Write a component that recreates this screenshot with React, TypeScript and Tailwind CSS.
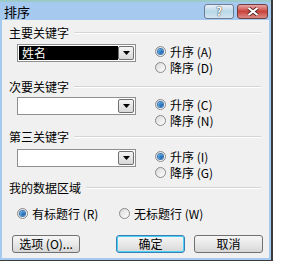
import React from "react";

const font = { fontFamily: '"Noto Sans CJK SC", "Noto Sans", sans-serif' };

const Radio = ({ checked }: { checked?: boolean }) => (
  <span className="w-[11px] h-[11px] rounded-full border border-[#8a8a8a] bg-gradient-to-br from-[#d9d9d9] to-[#ffffff] flex items-center justify-center shrink-0">
    {checked && (
      <span className="w-[5px] h-[5px] rounded-full bg-gradient-to-br from-[#62b8f0] to-[#0d4f9c] shadow-[0_0_0_1px_#3a78b8]" />
    )}
  </span>
);

const RadioItem = ({ label, checked }: { label: string; checked?: boolean }) => (
  <div className="flex items-center gap-[4px] h-[16px]">
    <Radio checked={checked} />
    <span className="text-[12px] leading-[13px] text-black whitespace-nowrap">{label}</span>
  </div>
);

const GroupLabel = ({ text }: { text: string }) => (
  <div className="flex items-center h-[12px] pr-[8px]">
    <span className="text-[12px] leading-none text-black whitespace-nowrap">{text}</span>
    <div className="flex-1 ml-[5px] border-t border-[#d5d5d5] border-b border-b-white" />
  </div>
);

const Combo = ({ value }: { value?: string }) => (
  <div className="w-[119px] h-[18px] border border-[#8e8f8f] bg-white flex p-[1px]">
    <div className={`flex-1 flex items-center pl-[3px] ${value ? "bg-black" : "bg-white"}`}>
      {value && <span className="text-[12px] leading-none text-white">{value}</span>}
    </div>
    <div className="w-[16px] border border-[#707070] rounded-[2px] bg-gradient-to-b from-[#f4f4f4] to-[#d8d8d8] flex items-center justify-center">
      <svg width="7" height="4" viewBox="0 0 7 4">
        <path d="M0 0h7L3.5 4z" fill="#000" />
      </svg>
    </div>
  </div>
);

const KeySection = ({ label, value, asc, desc, mt, gap }: { label: string; value?: string; asc: string; desc: string; mt: string; gap: string }) => (
  <div className={mt}>
    <GroupLabel text={label} />
    <div className={`flex items-start ${gap}`}>
      <div className="ml-[8px]">
        <Combo value={value} />
      </div>
      <div className="ml-[19px] -mt-[1px] flex flex-col">
        <RadioItem label={asc} checked />
        <RadioItem label={desc} />
      </div>
    </div>
  </div>
);

const Button = ({ label, primary, w }: { label: string; primary?: boolean; w: string }) => (
  <div
    className={`${w} h-[18px] rounded-[3px] border flex items-center justify-center text-[12px] leading-none text-black bg-gradient-to-b from-[#f6f6f6] via-[#e8e8e8] to-[#d6d6d6] ${
      primary ? "border-[#3c7fb1] shadow-[inset_0_0_0_1px_#48d2fb]" : "border-[#707070]"
    }`}
  >
    {label}
  </div>
);

export default function App() {
  return (
    <div className="w-[282px] h-[270px] bg-white overflow-hidden" style={font}>
      <div className="w-[273px] h-[261px] flex flex-col border-r-2 border-b border-[#3b3b3b]">
        <div className="h-[20px] bg-[#a6c9ef] border-t-2 border-[#9ccac8] flex items-center pl-[4px] pr-[3px]">
          <span className="text-[13px] leading-none text-black">排序</span>
          <div className="ml-auto flex gap-[3px]">
            <div className="w-[30px] h-[15px] rounded-[3px] border border-[#6d7d93] bg-gradient-to-b from-[#e9eef8] via-[#b7d8e6] to-[#d6e4f1] flex items-center justify-center">
              <span className="text-[12px] font-bold leading-none text-white [text-shadow:0_0_1px_#333,0_0_1px_#333]">?</span>
            </div>
            <div className="w-[31px] h-[15px] rounded-[3px] border border-[#6d3f3f] bg-gradient-to-b from-[#e7a5a5] via-[#c8413a] to-[#d98a86] flex items-center justify-center">
              <svg width="12" height="9" viewBox="0 0 12 9">
                <path d="M1.5 1l9 7M10.5 1l-9 7" stroke="#4a2020" strokeWidth="3.6" />
                <path d="M1.5 1l9 7M10.5 1l-9 7" stroke="#fff" strokeWidth="2.2" />
              </svg>
            </div>
          </div>
        </div>
        <div className="flex-1 bg-[#f0f0f0] border-l-2 border-r-2 border-b-2 border-[#a6c9ef] pl-[7px]">
          <KeySection label="主要关键字" value="姓名" asc="升序 (A)" desc="降序 (D)" mt="mt-[7px]" gap="mt-[5px]" />
          <KeySection label="次要关键字" asc="升序 (C)" desc="降序 (N)" mt="mt-[6px]" gap="mt-[4px]" />
          <KeySection label="第三关键字" asc="升序 (I)" desc="降序 (G)" mt="mt-[3px]" gap="mt-[6px]" />
          <div className="mt-[2px]">
            <GroupLabel text="我的数据区域" />
          </div>
          <div className="mt-[11px] flex items-center pl-[8px]">
            <div className="w-[102px]">
              <RadioItem label="有标题行 (R)" checked />
            </div>
            <RadioItem label="无标题行 (W)" />
          </div>
          <div className="mt-[14px] flex items-center pl-[3px]">
            <Button label="选项 (O)..." w="w-[68px]" />
            <div className="ml-[36px]">
              <Button label="确定" primary w="w-[69px]" />
            </div>
            <div className="ml-[9px]">
              <Button label="取消" w="w-[69px]" />
            </div>
          </div>
        </div>
      </div>
    </div>
  );
}
